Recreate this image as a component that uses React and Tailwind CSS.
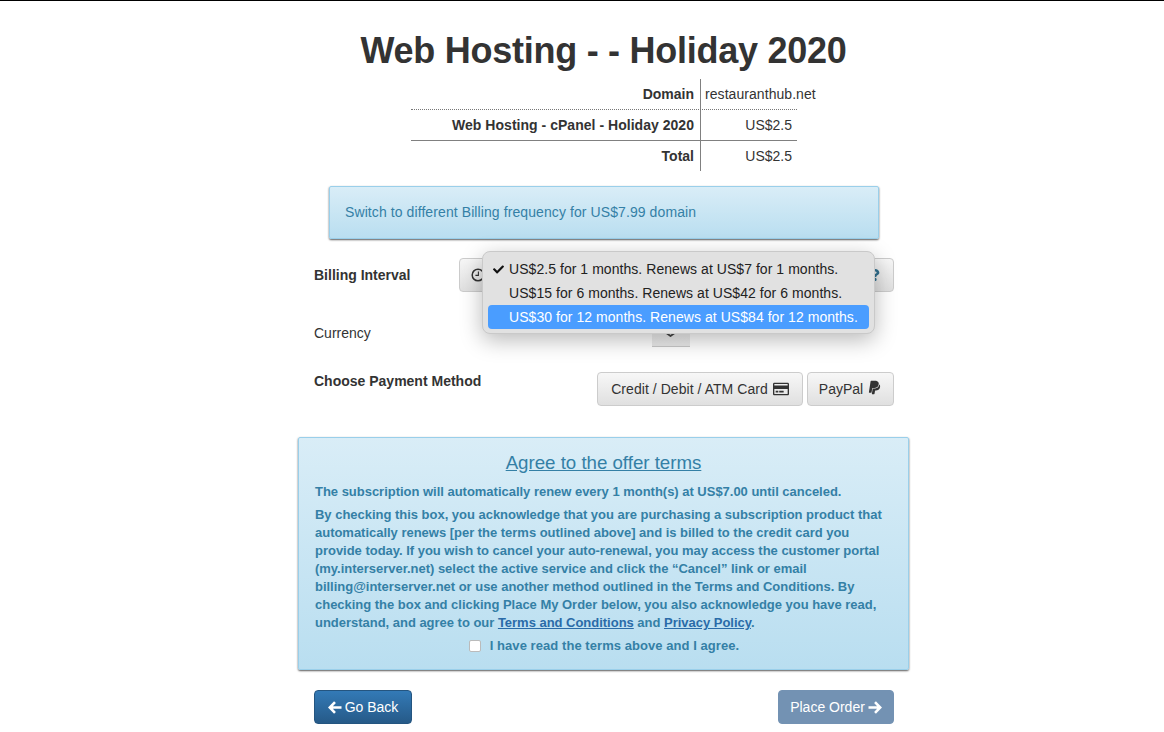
import React from "react";
import { FaPaypal, FaQuestion, FaRegCreditCard, FaCheck } from "react-icons/fa";

const btn = "flex items-center rounded border border-[#ccc] bg-gradient-to-b from-[#f7f7f7] to-[#e0e0e0] text-[14px] text-[#333]";
const alert = "border border-[#9acfea] bg-gradient-to-b from-[#d9edf7] to-[#b9def0] rounded-[2px] shadow-[0_1px_2px_rgba(0,0,0,0.65)]";

function Arrow({ right }) {
  return (
    <svg width="14" height="13" viewBox="0 0 14 13" fill="none" stroke="currentColor" strokeWidth="2.6" className={right ? "rotate-180" : ""}>
      <path d="M7 1.2 L1.8 6.5 L7 11.8 M2 6.5 H13.5" />
    </svg>
  );
}

function Clock() {
  return (
    <svg width="14" height="14" viewBox="0 0 14 14" fill="none" stroke="#333" strokeWidth="1.5">
      <circle cx="7" cy="7" r="5.8" />
      <path d="M7.4 3.4 V7.4 H4.4" strokeWidth="1.1" />
    </svg>
  );
}

function Row({ label, value, border, labelClass }) {
  return (
    <div className={"flex w-[386px] " + (border || "")}>
      <div className={"w-[289px] flex items-center justify-end pr-[6px] font-bold h-full " + (labelClass || "")}>{label}</div>
      <div className="w-[97px] border-l border-[#808080] flex items-center justify-end pr-[5px] h-full whitespace-nowrap">{value}</div>
    </div>
  );
}

export default function App() {
  return (
    <div className="min-h-[732px] bg-white border-t border-black text-[14px] text-[#333] font-['Liberation_Sans',Arial,sans-serif] overflow-hidden">
      <div className="w-[611px] ml-[298px]">
        <h1 className="text-[36px] leading-[40px] font-bold text-center mt-[30px] h-[40px] text-[#333] tracking-[-0.26px]">Web Hosting - - Holiday 2020</h1>
        <div className="mt-[8px] ml-[113px] w-[386px]">
          <div className="h-[31px]"><Row label="Domain" value={<span className="w-[91px] min-w-0 pl-[4px] tracking-[0.06px]">restauranthub.net</span>} border="h-[31px] border-b border-dotted border-[#777]" /></div>
          <Row label="Web Hosting - cPanel - Holiday 2020" labelClass="tracking-[0.03px]" value="US$2.5" border="h-[31px] border-b border-[#808080]" />
          <Row label="Total" value="US$2.5" border="h-[30px]" />
        </div>
        <div className={alert + " mt-[15px] ml-[31px] w-[550px] h-[53px] flex items-center pl-[15px] tracking-[0.09px] text-[#3480a6]"}>Switch to different Billing frequency for US$7.99 domain</div>

        <div className="ml-[16px] w-[580px] relative">
          <div className="flex justify-between mt-[19px] h-[34px]">
            <div className="font-bold pt-[7px]">Billing Interval</div>
            <div className={btn + " w-[435px] h-[34px] justify-between pl-[11px] pr-[12px]"}>
              <Clock />
              <FaQuestion className="text-[12px] text-[#31708f]" />
            </div>
          </div>
          <div className="flex mt-[24px] h-[31px] relative">
            <div className="pt-[7px]">Currency</div>
            <div className="ml-[281px] w-[38px] h-[31px] bg-gradient-to-b from-[#fafafa] to-[#eaeaea] border-b border-[#c8c8c8] flex items-end justify-center pb-[9px]">
              <svg width="11" height="5" viewBox="0 0 11 5" fill="none" stroke="#444" strokeWidth="1.8"><path d="M0.6 0.5 L5.5 4 L10.4 0.5" /></svg>
            </div>
          </div>
          <div className="flex justify-between mt-[25px]">
            <div className="font-bold -mt-[1px]">Choose Payment Method</div>
            <div className="flex gap-[4px]">
              <div className={btn + " justify-center w-[206px] h-[34px] gap-[5px] tracking-[0.05px]"}>Credit / Debit / ATM Card <FaRegCreditCard className="text-[16px] text-[#333]" /></div>
              <div className={btn + " justify-center w-[87px] h-[34px] gap-[4px]"}>PayPal <FaPaypal className="text-[15px] text-[#333] -mt-[3px]" /></div>
            </div>
          </div>

          <div className="absolute left-[168px] top-[-7px] w-[393px] h-[83px] rounded-[8px] bg-[#e1e1e1] border border-[#c9c9c9] shadow-[0_6px_22px_rgba(0,0,0,0.28)] px-[5px] py-[5px] text-[14px] text-[#222] tracking-[0.05px]">
            <div className="h-[24px] flex items-center pl-[21px] relative whitespace-nowrap"><FaCheck className="absolute left-[5px] top-[7px] text-[11px] text-[#111]" />US$2.5 for 1 months. Renews at US$7 for 1 months.</div>
            <div className="h-[24px] flex items-center pl-[21px] whitespace-nowrap">US$15 for 6 months. Renews at US$42 for 6 months.</div>
            <div className="h-[24px] flex items-center pl-[21px] whitespace-nowrap bg-[#4a9dff] text-white rounded-[4px]">US$30 for 12 months. Renews at US$84 for 12 months.</div>
          </div>
        </div>

        <div className={alert + " mt-[31px] h-[233px] px-[16px] pt-[15px] font-bold text-[13px] leading-[18px] tracking-[-0.02px] text-[#3480a6]"}>
          <h3 className="text-[18.72px] leading-[20px] font-normal text-center underline">Agree to the offer terms</h3>
          <p className="mt-[10px] font-bold">The subscription will automatically renew every 1 month(s) at US$7.00 until canceled.</p>
          <p className="mt-[5px] whitespace-nowrap">
            By checking this box, you acknowledge that you are purchasing a subscription product that<br />
            automatically renews [per the terms outlined above] and is billed to the credit card you<br />
            provide today. If you wish to cancel your auto-renewal, you may access the customer portal<br />
            (my.interserver.net) select the active service and click the “Cancel” link or email<br />
            billing@interserver.net or use another method outlined in the Terms and Conditions. By<br />
            checking the box and clicking Place My Order below, you also acknowledge you have read,<br />
            understand, and agree to our <a className="underline text-[#2a6ba8]">Terms and Conditions</a> and <a className="underline text-[#2a6ba8]">Privacy Policy</a>.
          </p>
          <div className="mt-[5px] flex items-center justify-center gap-[9px] pl-[1px]">
            <span className="w-[12px] h-[12px] rounded-[2px] bg-white border border-[#bbb]"></span>
            <span className="tracking-[0.06px]">I have read the terms above and I agree.</span>
          </div>
        </div>

        <div className="ml-[16px] w-[580px] mt-[20px] flex justify-between">
          <div className="w-[98px] h-[34px] rounded bg-gradient-to-b from-[#337ab7] to-[#265a88] border border-[#245580] text-white flex items-center justify-center gap-[3px]"><Arrow />Go Back</div>
          <div className="w-[116px] h-[34px] rounded bg-[#7392b3] border border-[#7392b3] text-white flex items-center justify-center gap-[3px]">Place Order<Arrow right /></div>
        </div>
      </div>
    </div>
  );
}
